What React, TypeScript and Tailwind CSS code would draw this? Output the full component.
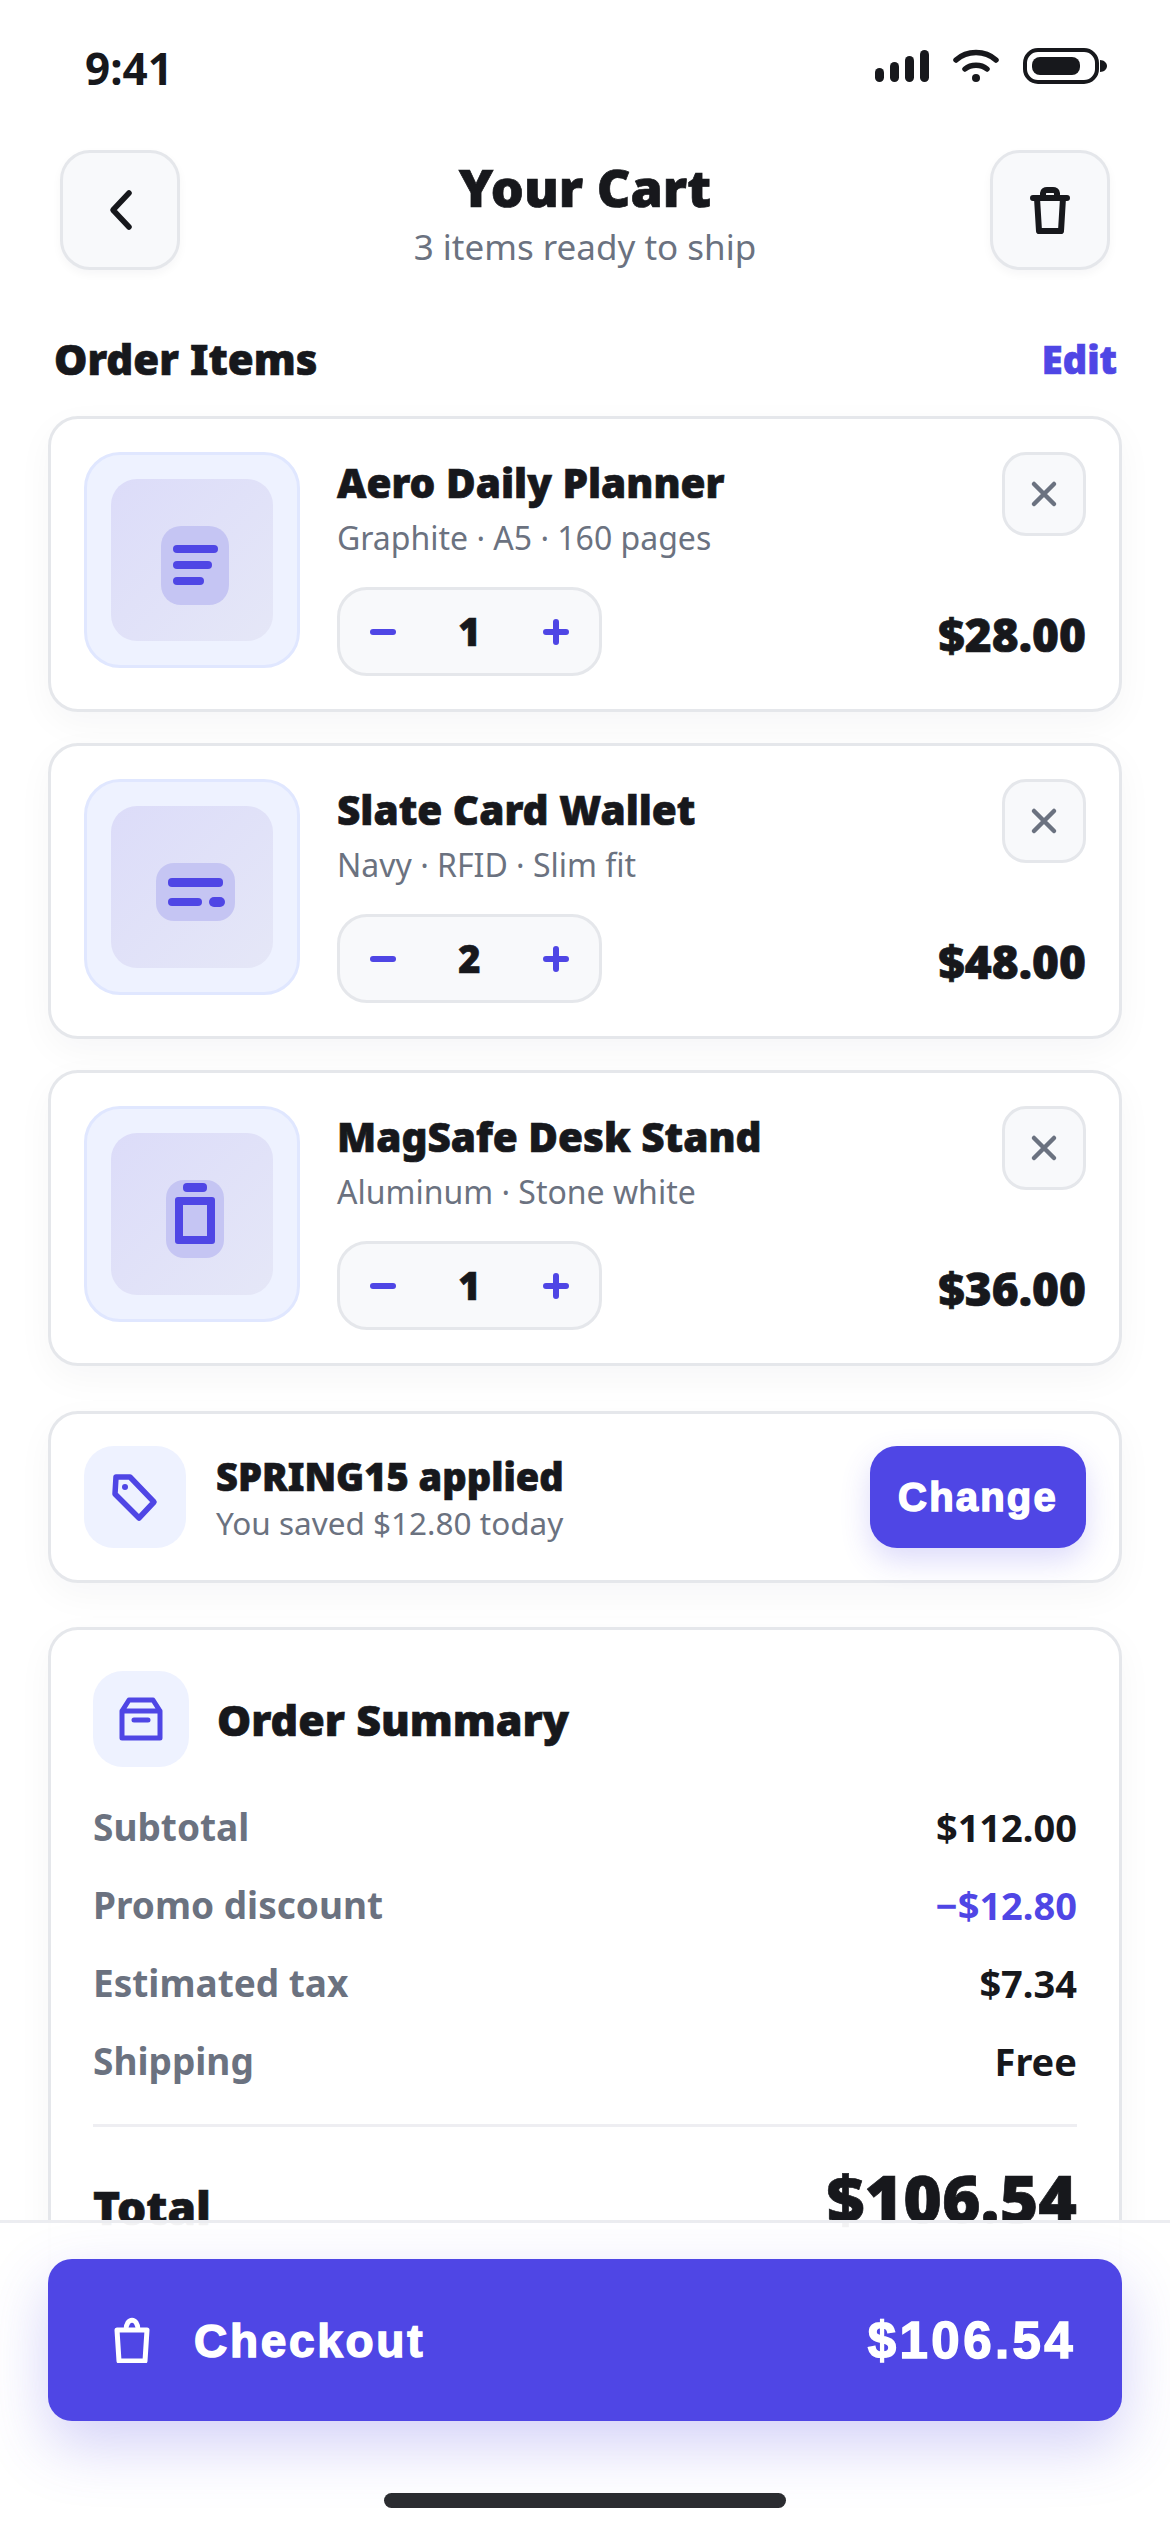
const font = "font-['Noto_Sans',sans-serif]";
const heavy = "font-black [-webkit-text-stroke:0.7px_currentColor]";

function ItemIcon({ kind }: { kind: string }) {
  if (kind === "planner") {
    return (
      <div className="ml-[6px] mt-[10px] flex h-[79px] w-[68px] flex-col justify-center gap-[8px] rounded-[20px] bg-[#c5c5f3] pl-[12px]">
        <div className="h-[8px] w-[45px] rounded-[4px] bg-[#4f46e5]" />
        <div className="h-[8px] w-[39px] rounded-[4px] bg-[#4f46e5]" />
        <div className="h-[8px] w-[31px] rounded-[4px] bg-[#4f46e5]" />
      </div>
    );
  }
  if (kind === "wallet") {
    return (
      <div className="ml-[6px] mt-[10px] flex h-[58px] w-[79px] flex-col justify-center gap-[10px] rounded-[18px] bg-[#c5c5f3] pl-[12px]">
        <div className="h-[9px] w-[55px] rounded-[4px] bg-[#4f46e5]" />
        <div className="flex items-center gap-[7px]">
          <div className="h-[8px] w-[34px] rounded-[4px] bg-[#4f46e5]" />
          <div className="h-[10px] w-[16px] rounded-[5px] bg-[#4f46e5]" />
        </div>
      </div>
    );
  }
  return (
    <div className="ml-[6px] mt-[10px] flex h-[78px] w-[58px] flex-col items-center gap-[5px] rounded-[18px] bg-[#c5c5f3] pt-[3px]">
      <div className="h-[9px] w-[24px] rounded-[4px] bg-[#4f46e5]" />
      <div className="h-[47px] w-[40px] rounded-[3px] border-[8px] border-[#4f46e5]" />
    </div>
  );
}

function CartItem({ title, meta, qty, price, kind }: { title: string; meta: string; qty: number; price: string; kind: string }) {
  return (
    <div className="flex h-[296px] rounded-[30px] border-[3px] border-[#e5e7eb] bg-white p-[33px] shadow-[0_12px_36px_rgba(17,24,39,0.04)]">
      <div className="flex h-[216px] w-[216px] shrink-0 items-center justify-center rounded-[36px] border-[3px] border-[#e0e7ff] bg-[#eef2ff]">
        <div className="flex h-[162px] w-[162px] items-center justify-center rounded-[26px] bg-gradient-to-br from-[#dcdcf9] to-[#e5e7f7]">
          <ItemIcon kind={kind} />
        </div>
      </div>
      <div className="ml-[37px] flex min-w-0 flex-1 flex-col">
        <div className="flex justify-between">
          <div className="pt-[6px]">
            <div className={`text-[40.5px] leading-[50px] ${heavy} text-[#17181c]`}>{title}</div>
            <div className="mt-[8px] text-[32px] leading-[44px] text-[#6b7280]">{meta}</div>
          </div>
          <button className="flex h-[84px] w-[84px] items-center justify-center rounded-[24px] border-[3px] border-[#e5e7eb] bg-[#f8f9fb]">
            <svg width="30" height="30" viewBox="0 0 30 30" fill="none" stroke="#6b7280" strokeWidth="4.5" strokeLinecap="round"><path d="M5 5l20 20M25 5L5 25" /></svg>
          </button>
        </div>
        <div className="mt-auto flex items-end justify-between">
          <div className="flex h-[89px] w-[265px] items-center justify-between rounded-[30px] border-[3px] border-[#e5e7eb] bg-[#f8f9fb] px-[30px]">
            <div className="h-[6px] w-[26px] rounded-[3px] bg-[#4f46e5]" />
            <span className={`text-[38px] ${heavy} text-[#17181c]`}>{qty}</span>
            <svg width="26" height="26" viewBox="0 0 26 26" fill="none" stroke="#4f46e5" strokeWidth="6" strokeLinecap="round"><path d="M3 13h20M13 3v20" /></svg>
          </div>
          <div className={`mb-[12px] text-[46px] leading-[60px] ${heavy} text-[#17181c]`}>{price}</div>
        </div>
      </div>
    </div>
  );
}

function SummaryRow({ label, value, accent }: { label: string; value: string; accent?: boolean }) {
  return (
    <div className="flex h-[78px] items-center justify-between font-bold">
      <span className="text-[37px] text-[#6b7280]">{label}</span>
      <span className={`text-[38px] ${accent ? "text-[#4f46e5]" : "text-[#17181c]"}`}>{value}</span>
    </div>
  );
}

export default function App() {
  return (
    <div className={`${font} relative h-[2532px] w-[1170px] overflow-hidden bg-white`}>
      {/* status bar */}
      <div className="flex h-[150px] items-start justify-between pt-[38px] pr-[63px] pl-[85px]">
        <span className="text-[44px] leading-[60px] font-bold text-[#17181c]">9:41</span>
        <div className="mt-[10px] flex items-center gap-[24px]">
          <svg width="54" height="32" viewBox="0 0 54 32" fill="#17181c">
            <rect x="0" y="18" width="9" height="14" rx="4.5" />
            <rect x="15" y="12" width="9" height="20" rx="4.5" />
            <rect x="30" y="6" width="9" height="26" rx="4.5" />
            <rect x="45" y="0" width="9" height="32" rx="4.5" />
          </svg>
          <svg width="46" height="34" viewBox="0 0 46 34" fill="none" stroke="#17181c" strokeWidth="5.5" strokeLinecap="round">
            <path d="M3 11c11-10 29-10 40 0" />
            <path d="M12 20c6-5 16-5 22 0" />
            <circle cx="23" cy="29" r="4" fill="#17181c" stroke="none" />
          </svg>
          <svg width="84" height="36" viewBox="0 0 84 36" fill="none">
            <rect x="2" y="2" width="72" height="32" rx="13" stroke="#17181c" strokeWidth="4" />
            <rect x="9" y="9" width="48" height="18" rx="8" fill="#17181c" />
            <path d="M77 12c4 0 7 3 7 6s-3 6-7 6z" fill="#17181c" />
          </svg>
        </div>
      </div>

      {/* header */}
      <div className="flex h-[120px] items-center justify-between px-[60px]">
        <button className="flex h-[120px] w-[120px] items-center justify-center rounded-[30px] border-[3px] border-[#e5e7eb] bg-[#f8f9fb] shadow-[0_4px_10px_rgba(17,24,39,0.04)]">
          <svg width="30" height="42" viewBox="0 0 30 42" fill="none" stroke="#17181c" strokeWidth="5.5" strokeLinecap="round" strokeLinejoin="round"><path d="M24 4L8 21l16 17" /></svg>
        </button>
        <div className="pt-[4px] text-center">
          <div className={`text-[52px] leading-[66px] ${heavy} text-[#17181c]`}>Your Cart</div>
          <div className="mt-[4px] text-[35px] leading-[46px] text-[#6b7280]">3 items ready to ship</div>
        </div>
        <button className="flex h-[120px] w-[120px] items-center justify-center rounded-[30px] border-[3px] border-[#e5e7eb] bg-[#f8f9fb] shadow-[0_4px_10px_rgba(17,24,39,0.04)]">
          <svg width="40" height="48" viewBox="0 0 40 48" fill="none" stroke="#17181c" strokeWidth="6" strokeLinejoin="round" strokeLinecap="round"><path d="M3 12h34M13 11V7c0-2 2-3 4-3h6c2 0 4 1 4 3v4M7 12l2 33h22l2-33" /></svg>
        </button>
      </div>

      {/* section */}
      <div className="mt-[59px] flex items-center justify-between pr-[53px] pl-[54px]">
        <span className={`text-[42px] leading-[60px] ${heavy} text-[#17181c]`}>Order Items</span>
        <span className={`text-[38px] leading-[60px] ${heavy} text-[#4f46e5]`}>Edit</span>
      </div>

      <div className="mt-[27px] px-[48px]">
        <div className="flex flex-col gap-[31px]">
          <CartItem kind="planner" title="Aero Daily Planner" meta="Graphite · A5 · 160 pages" qty={1} price="$28.00" />
          <CartItem kind="wallet" title="Slate Card Wallet" meta="Navy · RFID · Slim fit" qty={2} price="$48.00" />
          <CartItem kind="stand" title="MagSafe Desk Stand" meta="Aluminum · Stone white" qty={1} price="$36.00" />
        </div>

        {/* promo */}
        <div className="mt-[45px] flex h-[172px] items-center rounded-[30px] border-[3px] border-[#e5e7eb] bg-white px-[33px] shadow-[0_12px_36px_rgba(17,24,39,0.04)]">
          <div className="flex h-[102px] w-[102px] items-center justify-center rounded-[30px] bg-[#eef2ff]">
            <svg width="50" height="50" viewBox="0 0 50 50" fill="none" stroke="#4f46e5" strokeWidth="5.5" strokeLinejoin="round"><path d="M6 5h14l24 25-15 16L5 22z" /><circle cx="15" cy="15" r="3" fill="#4f46e5" stroke="none" /></svg>
          </div>
          <div className="ml-[30px] flex-1 pt-[2px]">
            <div className={`text-[38px] leading-[48px] ${heavy} text-[#17181c]`}>SPRING15 applied</div>
            <div className="mt-[2px] text-[31.5px] leading-[42px] text-[#6b7280]">You saved $12.80 today</div>
          </div>
          <button className="h-[102px] w-[216px] rounded-[27px] bg-[#4f46e5] font-['Liberation_Sans',sans-serif] text-[40px] font-bold tracking-[2.2px] text-white shadow-[0_12px_30px_rgba(79,70,229,0.2)] [-webkit-text-stroke:1.5px_#fff]">Change</button>
        </div>

        {/* summary */}
        <div className="mt-[44px] h-[700px] rounded-[30px] border-[3px] border-[#e5e7eb] bg-white px-[42px] pt-[41px] shadow-[0_12px_36px_rgba(17,24,39,0.04)]">
          <div className="flex items-center gap-[28px]">
            <div className="flex h-[96px] w-[96px] items-center justify-center rounded-[30px] bg-[#eef2ff]">
              <svg width="44" height="44" viewBox="0 0 44 44" fill="none" stroke="#4f46e5" strokeWidth="5" strokeLinejoin="round" strokeLinecap="round"><path d="M3 14l7-11h24l7 11v27H3zM3 14h38M15 23h14" /></svg>
            </div>
            <span className={`pt-[2px] text-[43px] ${heavy} text-[#17181c]`}>Order Summary</span>
          </div>
          <div className="mt-[21px]">
            <SummaryRow label="Subtotal" value="$112.00" />
            <SummaryRow label="Promo discount" value="−$12.80" accent />
            <SummaryRow label="Estimated tax" value="$7.34" />
            <SummaryRow label="Shipping" value="Free" />
          </div>
          <div className="mt-[24px] h-[3px] bg-[#eeeef2]" />
          <div className="mt-[25px] flex items-end justify-between">
            <span className={`text-[46px] ${heavy} text-[#17181c]`}>Total</span>
            <span className={`text-[66px] leading-[90px] ${heavy} text-[#17181c]`}>$106.54</span>
          </div>
        </div>
      </div>

      {/* sticky footer */}
      <div className="absolute right-0 bottom-0 left-0 h-[312px] border-t-[3px] border-[#ecedf1] bg-white/95 px-[48px] pt-[36px]">
        <button className="flex h-[162px] w-full items-center justify-between rounded-[24px] bg-[#4f46e5] pr-[46px] pl-[66px] font-['Liberation_Sans',sans-serif] font-bold text-white shadow-[0_24px_60px_rgba(79,70,229,0.25)] [-webkit-text-stroke:1.5px_#fff]">
          <span className="flex items-center gap-[44px]">
            <svg width="36" height="46" viewBox="0 0 36 46" fill="none" stroke="#fff" strokeWidth="5" strokeLinejoin="round"><path d="M3 13h30l-2 31H5zM12 13c0-13 12-13 12 0" /></svg>
            <span className="pt-[3px] text-[46px] tracking-[2.7px]">Checkout</span>
          </span>
          <span className="pt-[3px] text-[51px] tracking-[3.4px]">$106.54</span>
        </button>
        <div className="absolute bottom-[24px] left-[384px] h-[15px] w-[402px] rounded-full bg-[#2b2c30]" />
      </div>
    </div>
  );
}
